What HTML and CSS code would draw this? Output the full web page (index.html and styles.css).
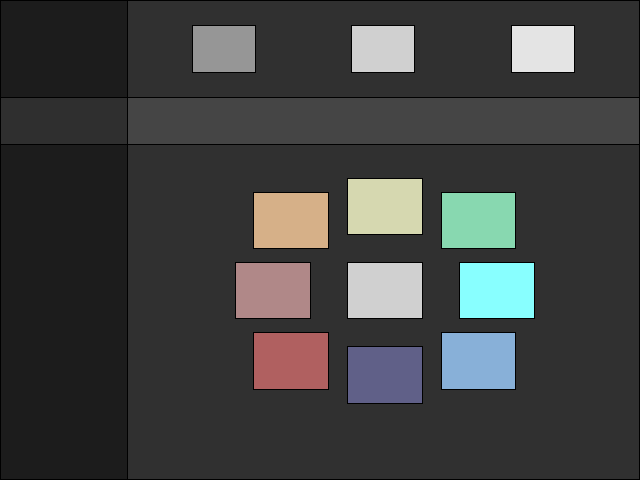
FILE: index.html
```html
<!DOCTYPE html>
<html>
<head>
<meta charset="utf-8">
<link rel="stylesheet" href="styles.css">
</head>
<body>
<div class="frame">
  <div class="cell side"></div>
  <div class="cell top">
    <div class="swatch s-grey1"></div>
    <div class="swatch s-grey2"></div>
    <div class="swatch s-grey3"></div>
  </div>
  <div class="cell bar-left"></div>
  <div class="cell bar-right"></div>
  <div class="cell side"></div>
  <div class="cell canvas">
    <div class="dot d-tan"></div>
    <div class="dot d-yellow"></div>
    <div class="dot d-green"></div>
    <div class="dot d-pink"></div>
    <div class="dot d-grey"></div>
    <div class="dot d-cyan"></div>
    <div class="dot d-red"></div>
    <div class="dot d-purple"></div>
    <div class="dot d-blue"></div>
  </div>
</div>
</body>
</html>
```
FILE: styles.css
```css
html, body {
  margin: 0;
  padding: 0;
  background: #000;
}
.frame {
  width: 640px;
  height: 480px;
  box-sizing: border-box;
  padding: 1px;
  display: grid;
  grid-template-columns: 126px 511px;
  grid-template-rows: 96px 46px 334px;
  gap: 1px;
  background: #000;
}
.side { background: #1c1c1c; }
.top {
  background: #303030;
  display: flex;
  align-items: center;
  gap: 95px;
  padding: 0 64px;
}
.bar-left { background: #2f2f2f; }
.bar-right { background: #454545; }
.canvas {
  background: #303030;
  position: relative;
}
.swatch {
  width: 64px;
  height: 48px;
  box-sizing: border-box;
  border: 1px solid #000;
}
.s-grey1 { background: #969696; }
.s-grey2 { background: #d0d0d0; }
.s-grey3 { background: #e4e4e4; margin-left: 1px; }

.dot {
  position: absolute;
  width: 76px;
  height: 57px;
  box-sizing: border-box;
  border: 1px solid #000;
}
.d-tan { left: 125px; top: 47px; background: #d6b088; }
.d-yellow { left: 219px; top: 33px; background: #d6d8b0; }
.d-green { left: 313px; top: 47px; width: 75px; background: #88d8b0; }
.d-pink { left: 107px; top: 117px; background: #b08888; }
.d-grey { left: 219px; top: 117px; background: #d0d0d0; }
.d-cyan { left: 331px; top: 117px; background: #88ffff; }
.d-red { left: 125px; top: 187px; height: 58px; background: #b06060; }
.d-purple { left: 219px; top: 201px; height: 58px; background: #606088; }
.d-blue { left: 313px; top: 187px; width: 75px; height: 58px; background: #88b0d8; }
```
